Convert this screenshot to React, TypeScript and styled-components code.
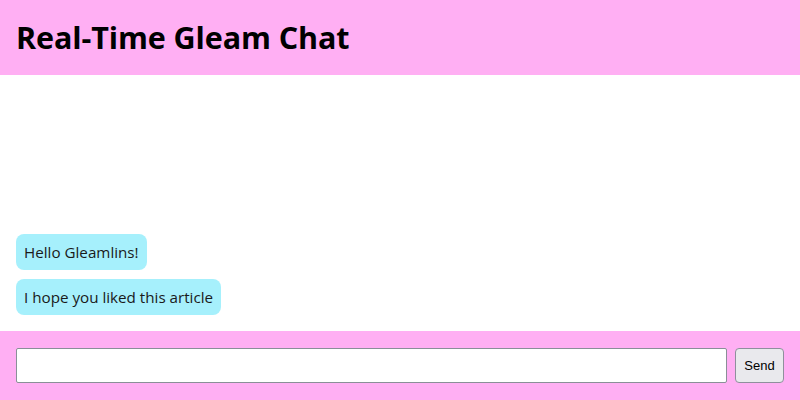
import React from "react";
import styled, { createGlobalStyle } from "styled-components";

const Global = createGlobalStyle`
  html, body { margin: 0; padding: 0; height: 100%; }
  body { font-family: "Open Sans", "Noto Sans", sans-serif; color: #000; }
  #root { height: 100%; }
`;

const Page = styled.div`
  height: 100vh;
  display: flex;
  flex-direction: column;
`;

const Header = styled.header`
  background: #ffaff3;
  padding: 16px;
  height: 75px;
  box-sizing: border-box;
  display: flex;
  align-items: center;
`;

const Title = styled.h1`
  margin: 0;
  font-size: 30.5px;
  font-weight: 700;
  letter-spacing: -0.1px;
  line-height: 43px;
`;

const Messages = styled.main`
  flex: 1;
  display: flex;
  flex-direction: column;
  justify-content: flex-end;
  align-items: flex-start;
  gap: 9px;
  padding: 16px;
`;

const Bubble = styled.div`
  background: #a6f0fc;
  border-radius: 8px;
  padding: 8px;
  font-size: 15.2px;
  line-height: 20px;
  color: #1a1a1a;
`;

const Footer = styled.form`
  background: #ffaff3;
  padding: 17px 16px;
  display: flex;
  gap: 8px;
  align-items: stretch;
`;

const Input = styled.input`
  flex: 1;
  height: 35px;
  box-sizing: border-box;
  border: 1px solid #8a8f98;
  border-radius: 2px;
  background: #fff;
  margin: 0;
`;

const Button = styled.button`
  width: 49px;
  height: 35px;
  box-sizing: border-box;
  border: 1px solid #8f8f9d;
  border-radius: 4px;
  background: #e9e9ed;
  font-family: "Liberation Sans", Arial, sans-serif;
  font-size: 13px;
  color: #000;
  padding: 0;
  margin: 0;
`;

export default function App() {
  return (
    <>
      <Global />
      <Page>
        <Header>
          <Title>Real-Time Gleam Chat</Title>
        </Header>
        <Messages>
          <Bubble>Hello Gleamlins!</Bubble>
          <Bubble>I hope you liked this article</Bubble>
        </Messages>
        <Footer onSubmit={(e) => e.preventDefault()}>
          <Input type="text" />
          <Button type="submit">Send</Button>
        </Footer>
      </Page>
    </>
  );
}
